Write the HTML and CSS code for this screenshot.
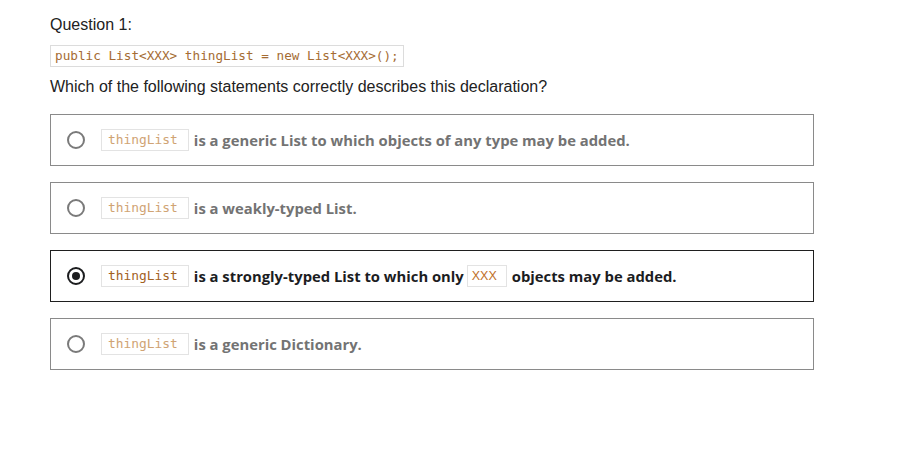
FILE: index.html
```html
<!DOCTYPE html>
<html>
<head>
<meta charset="utf-8">
<link rel="stylesheet" href="styles.css">
</head>
<body>
<div class="quiz">
  <div class="q-title">Question 1:</div>
  <div class="code-line"><code class="code-block">public List&lt;XXX&gt; thingList = new List&lt;XXX&gt;();</code></div>
  <div class="q-text">Which of the following statements correctly describes this declaration?</div>
  <div class="options">
    <label class="option">
      <span class="radio"></span>
      <span class="opt-text"><code class="chip">thingList</code><span>is a generic List to which objects of any type may be added.</span></span>
    </label>
    <label class="option">
      <span class="radio"></span>
      <span class="opt-text"><code class="chip">thingList</code><span>is a weakly-typed List.</span></span>
    </label>
    <label class="option selected">
      <span class="radio"></span>
      <span class="opt-text"><code class="chip">thingList</code><span>is a strongly-typed List to which only</span><code class="chip chip-sans">XXX</code><span>objects may be added.</span></span>
    </label>
    <label class="option">
      <span class="radio"></span>
      <span class="opt-text"><code class="chip">thingList</code><span>is a generic Dictionary.</span></span>
    </label>
  </div>
</div>
</body>
</html>
```

FILE: styles.css
```css
html, body {
  margin: 0;
  padding: 0;
  background: #ffffff;
}
.quiz {
  padding: 14px 0 0 50px;
  width: 764px;
  font-family: "Liberation Sans", Arial, sans-serif;
  color: #222;
}
.q-title {
  font-size: 16px;
  line-height: 22px;
  color: #222;
}
.code-line {
  margin-top: 9px;
  display: flex;
}
.code-block {
  font-family: "DejaVu Sans Mono", "Liberation Mono", monospace;
  font-size: 12.7px;
  line-height: 20px;
  color: #a56c33;
  border: 1px solid #dcdcdc;
  padding: 0 4px;
}
.q-text {
  margin-top: 9px;
  font-size: 16px;
  line-height: 22px;
  color: #222;
}
.options {
  margin-top: 16px;
  display: flex;
  flex-direction: column;
  gap: 16px;
}
.option {
  height: 52px;
  box-sizing: border-box;
  border: 1px solid #8a8a8a;
  display: flex;
  align-items: center;
  padding-left: 16px;
  font-family: "Open Sans", Lato, sans-serif;
  font-weight: 700;
  font-size: 14.8px;
  color: #737373;
}
.option.selected {
  border-color: #1f1f1f;
  color: #1c1d1f;
}
.radio {
  width: 14px;
  height: 14px;
  border: 2px solid #7a7a7a;
  border-radius: 50%;
  flex: none;
  display: flex;
  align-items: center;
  justify-content: center;
  margin-right: 16px;
}
.selected .radio {
  border-color: #1c1d1f;
}
.selected .radio::after {
  content: "";
  width: 8px;
  height: 8px;
  border-radius: 50%;
  background: #1c1d1f;
}
.opt-text {
  display: flex;
  align-items: center;
  white-space: nowrap;
}
.chip {
  font-family: "DejaVu Sans Mono", "Liberation Mono", monospace;
  font-weight: 400;
  font-size: 12.9px;
  line-height: 20px;
  color: #d0a374;
  border: 1px solid #e3e3e3;
  padding: 0 10px 0 6px;
  margin-right: 5px;
}
.selected .chip {
  color: #a2611f;
}
.chip-sans {
  font-family: "Liberation Sans", Arial, sans-serif;
  font-size: 12.5px;
  margin-left: 3px;
  padding: 0 9px 0 4px;
  color: #c0712a;
}
.selected .chip-sans {
  color: #c0712a;
}
```
